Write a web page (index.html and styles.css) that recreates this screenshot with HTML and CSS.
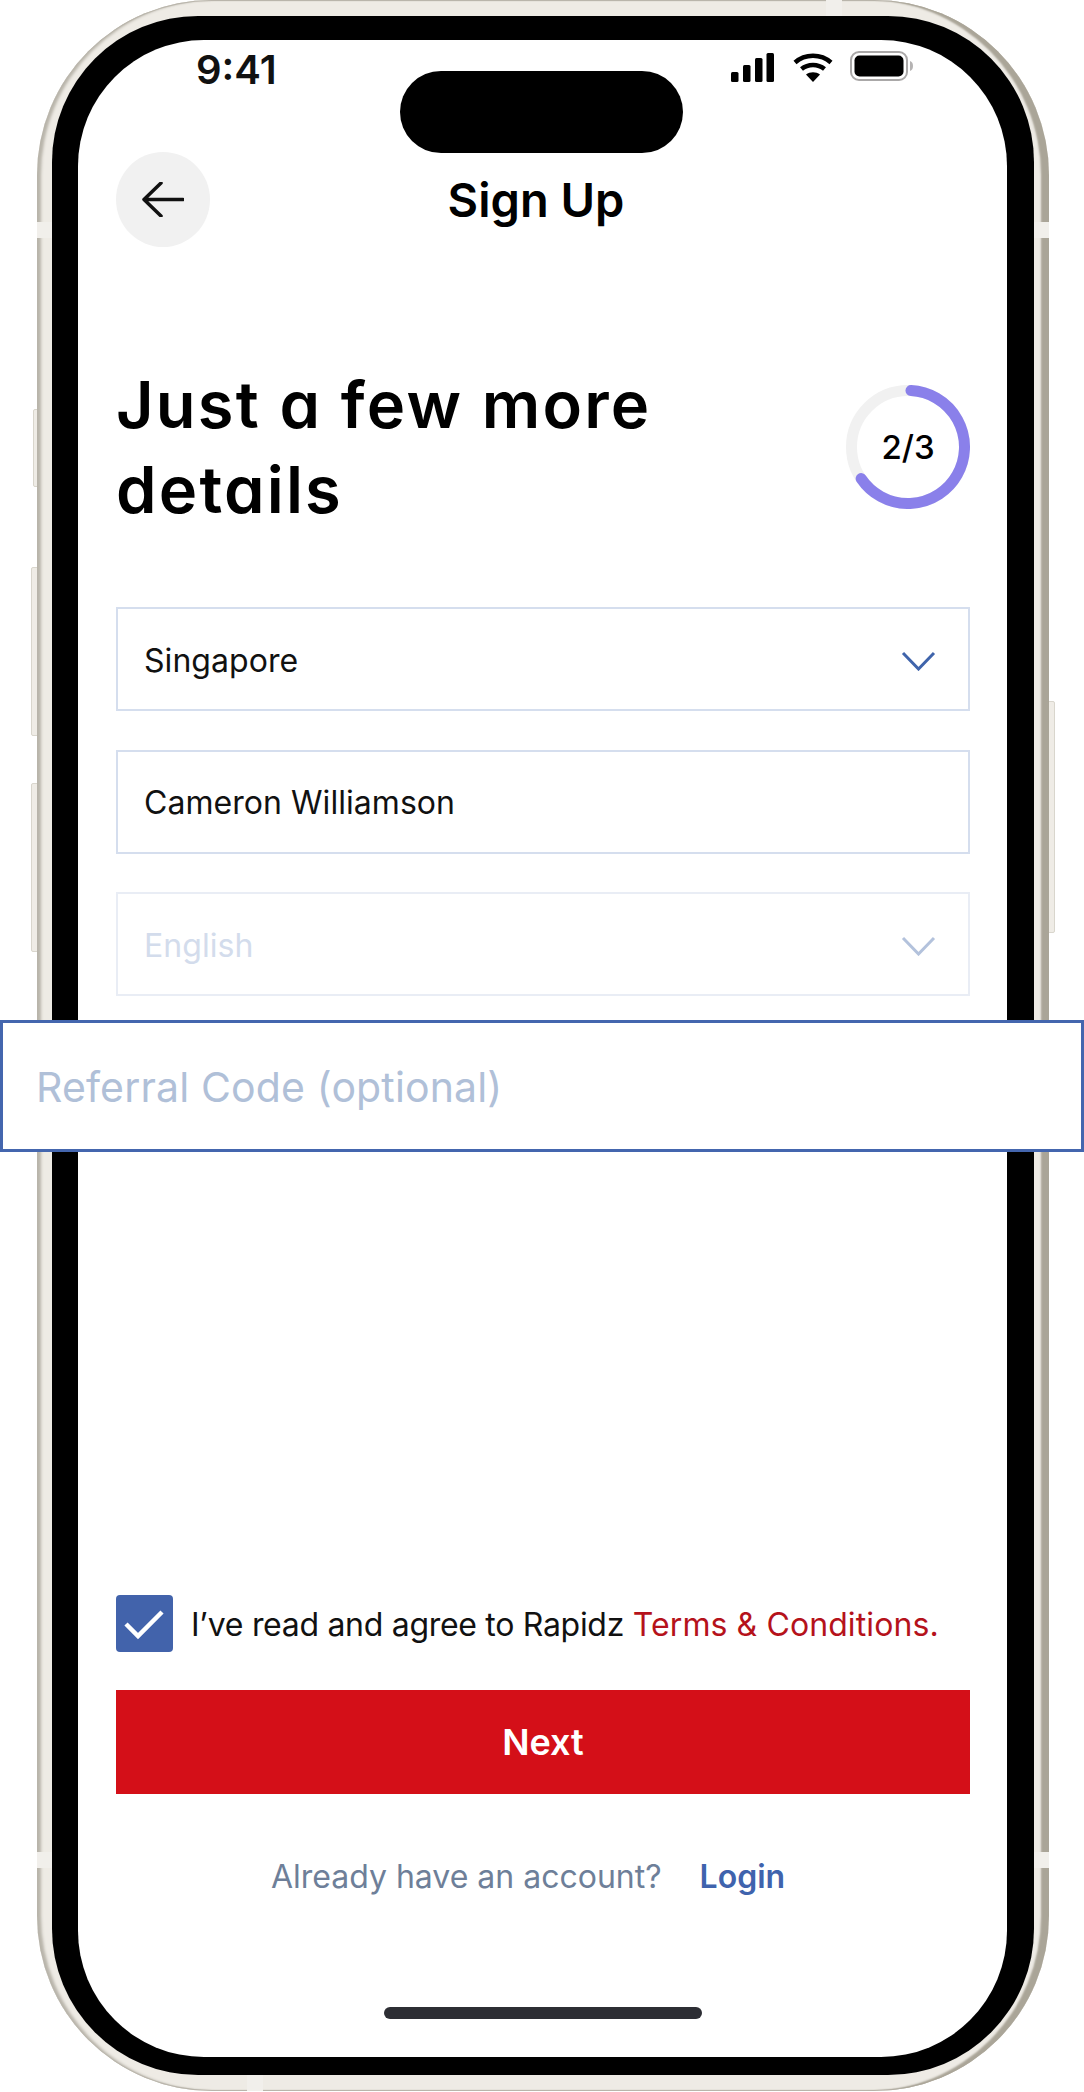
FILE: index.html
```html
<!DOCTYPE html>
<html lang="en">
<head>
    <meta charset="UTF-8">
    <meta name="viewport" content="width=device-width, initial-scale=1.0">
    <title>Sign Up</title>
    <link rel="stylesheet" href="styles.css">
</head>
<body>
    <div class="page">
        <!-- Side buttons and antenna bands of the phone -->
        <span class="side-btn btn-action"></span>
        <span class="side-btn btn-vol-up"></span>
        <span class="side-btn btn-vol-down"></span>
        <span class="side-btn btn-power"></span>

        <div class="phone">
            <span class="band band-top"></span>
            <span class="band band-left-top"></span>
            <span class="band band-right-top"></span>
            <span class="band band-left-bottom"></span>
            <span class="band band-right-bottom"></span>
            <span class="band band-bottom"></span>

            <div class="bezel">
                <div class="screen">
                    <div class="status-bar">
                        <div class="time">9:41</div>
                        <div class="island"></div>
                        <div class="status-icons">
                            <svg width="43" height="29" viewBox="0 0 43 29">
                                <rect x="0" y="19" width="7.5" height="10" rx="1.5"/>
                                <rect x="12" y="12" width="7.5" height="17" rx="1.5"/>
                                <rect x="24" y="5" width="7.5" height="24" rx="1.5"/>
                                <rect x="35.5" y="0" width="7.5" height="29" rx="1.5"/>
                            </svg>
                            <svg width="40" height="29" viewBox="0 0 40 29">
                                <path d="M2 9.5C12 .5 28 .5 38 9.5" fill="none" stroke="#000" stroke-width="4.5"/>
                                <path d="M8.5 16C15 10.5 25 10.5 31.5 16" fill="none" stroke="#000" stroke-width="4.5"/>
                                <path d="M20 29L13 21.5C17 18.5 23 18.5 27 21.5Z"/>
                            </svg>
                            <svg width="64" height="30" viewBox="0 0 64 30">
                                <rect x="1" y="1" width="56" height="28" rx="8" fill="none" stroke="#aaa8a8" stroke-width="2"/>
                                <rect x="4.5" y="4.5" width="49" height="21" rx="5"/>
                                <path d="M60 10c2 .5 3 2.500 3 5s-1 4.500-3 5Z" fill="#b5b3b3"/>
                            </svg>
                        </div>
                    </div>

                    <div class="content">
                        <div class="top-bar">
                            <button class="back-btn" type="button">
                                <svg width="42" height="35" viewBox="0 0 42 35">
                                    <path d="M41 17.500H2M19 1 2 17.500 19 34" fill="none" stroke="#111" stroke-width="3.500" stroke-linecap="round" stroke-linejoin="round"/>
                                </svg>
                            </button>
                            <h1 class="page-title">Sign Up</h1>
                        </div>

                        <div class="heading-row">
                            <h2 class="heading">Just a few more<br>details</h2>
                            <div class="ring">
                                <svg width="124" height="124" viewBox="0 0 124 124">
                                    <circle cx="62" cy="62" r="56.500" fill="none" stroke="#f1f1f1" stroke-width="11"/>
                                    <path d="M64.960 5.580A56.500 56.500 0 1 1 15.160 93.600" fill="none" stroke="#8a80ea" stroke-width="11" stroke-linecap="round"/>
                                </svg>
                                <span class="ring-label">2/3</span>
                            </div>
                        </div>

                        <div class="fields">
                            <div class="field">
                                <span class="field-text">Singapore</span>
                                <svg class="chevron" width="35" height="20" viewBox="0 0 35 20"><path d="M2 2 17.500 18 33 2" fill="none" stroke="#3f64ab" stroke-width="3"/></svg>
                            </div>
                            <div class="field">
                                <span class="field-text">Cameron Williamson</span>
                            </div>
                            <div class="field field-disabled">
                                <span class="field-text">English</span>
                                <svg class="chevron" width="35" height="20" viewBox="0 0 35 20"><path d="M2 2 17.500 18 33 2" fill="none" stroke="#b3c2dc" stroke-width="3"/></svg>
                            </div>
                        </div>

                        <div class="bottom">
                            <div class="agree">
                                <span class="checkbox">
                                    <svg width="57" height="57" viewBox="0 0 57 57"><path d="M10 29 22 41 46 17" fill="none" stroke="#fff" stroke-width="4.500"/></svg>
                                </span>
                                <span class="agree-text">I’ve read and agree to Rapidz <a class="terms" href="#">Terms &amp; Conditions.</a></span>
                            </div>
                            <button class="next-btn" type="button">Next</button>
                            <div class="login-row">
                                <span>Already have an account?</span>
                                <a class="login" href="#">Login</a>
                            </div>
                            <div class="home-bar"></div>
                        </div>
                    </div>
                </div>
            </div>
        </div>

        <!-- Focused input, blown up over the phone -->
        <div class="referral">Referral Code (optional)</div>
    </div>
</body>
</html>
```

FILE: styles.css
```css
body {
    margin: 0;
    background: #fff;
    font-family: Inter, "Liberation Sans", sans-serif;
    color: #111;
}
.page {
    position: relative;
    width: 1084px;
    height: 2092px;
    overflow: hidden;
}

/* Phone frame */
.phone {
    position: relative;
    box-sizing: border-box;
    width: 1012px;
    height: 2091px;
    margin-left: 37px;
    padding: 16px 15px 16px 15px;
    border-radius: 175px;
    background: #eeebe5;
    box-shadow: inset 5px 0 3px -1px #b8b4aa, inset -9px 0 2px -1px #aaa598, inset 0 2px 1px -1px #b5b1a7, inset 0 -2px 1px -1px #b5b1a7;
}
.bezel {
    box-sizing: border-box;
    height: 100%;
    padding: 24px 27px 18px 26px;
    border-radius: 146px;
    background: #000;
}
.screen {
    display: flex;
    flex-direction: column;
    height: 100%;
    border-radius: 126px;
    background: #fff;
}
.band {
    position: absolute;
    background: #f1efeb;
}
.band-top { left: 789px; top: 0; width: 16px; height: 16px; }
.band-left-top { left: 0; top: 222px; width: 15px; height: 16px; }
.band-right-top { right: 0; top: 222px; width: 15px; height: 16px; }
.band-left-bottom { left: 0; top: 1852px; width: 15px; height: 16px; }
.band-right-bottom { right: 0; top: 1852px; width: 15px; height: 16px; }
.band-bottom { left: 210px; bottom: 0; width: 16px; height: 16px; }

.side-btn {
    position: absolute;
    box-sizing: border-box;
    border: 1px solid #d9d6cd;
    background: #efece6;
}
.btn-action { left: 33px; top: 409px; width: 5px; height: 78px; border-radius: 2px 0 0 2px; }
.btn-vol-up { left: 31px; top: 567px; width: 7px; height: 169px; border-radius: 2px 0 0 2px; }
.btn-vol-down { left: 31px; top: 783px; width: 7px; height: 169px; border-radius: 2px 0 0 2px; }
.btn-power { left: 1048px; top: 701px; width: 7px; height: 232px; border-radius: 0 2px 2px 0; }

/* Status bar */
.status-bar {
    display: grid;
    grid-template-columns: 322px 283px 1fr;
    height: 113px;
}
.time {
    padding: 8px 0 0 118px;
    font-size: 40px;
    font-weight: 600;
    line-height: 44px;
}
.island {
    height: 82px;
    margin-top: 31px;
    border-radius: 41px;
    background: #000;
}
.status-icons {
    display: flex;
    align-items: flex-start;
    gap: 19px;
    padding: 13px 0 0 48px;
}
.status-icons svg:last-child {
    margin: -2px 0 0 -2px;
}

.content {
    display: flex;
    flex-direction: column;
    flex: 1;
    padding: 0 37px 38px 38px;
}

/* Title bar */
.top-bar {
    display: grid;
    grid-template-columns: 94px 1fr 94px;
    align-items: center;
    margin-top: -1px;
}
.back-btn {
    display: flex;
    align-items: center;
    justify-content: center;
    width: 94px;
    height: 95px;
    padding: 0;
    border: none;
    border-radius: 50%;
    background: #f1f1f1;
}
.page-title {
    margin: 0;
    padding-right: 14px;
    text-align: center;
    font-size: 47px;
    font-weight: 600;
    color: #000;
}

/* Heading and progress */
.heading-row {
    display: flex;
    justify-content: space-between;
    align-items: center;
    margin-top: 115px;
}
.heading {
    margin: 0;
    font-size: 65px;
    font-weight: 570;
    line-height: 85px;
    letter-spacing: 2.2px;
    color: #000;
    font-feature-settings: "cv11";
}
.ring {
    display: grid;
    place-items: center;
}
.ring svg, .ring-label {
    grid-area: 1 / 1;
}
.ring-label {
    font-size: 33px;
    font-weight: 500;
    color: #000;
}

/* Inputs */
.fields {
    display: flex;
    flex-direction: column;
    gap: 38.5px;
    margin-top: 75px;
}
.field {
    display: flex;
    justify-content: space-between;
    align-items: center;
    box-sizing: border-box;
    height: 104px;
    padding: 0 32px 0 26px;
    border: 2px solid #d5deee;
    font-size: 32px;
}
.field-text {
    padding-top: 2px;
    letter-spacing: 0.05px;
}
.chevron {
    margin-top: 3px;
}
.field-disabled {
    border-color: #e9edf5;
    color: #d3dcec;
}
.referral {
    position: absolute;
    left: 0;
    right: 0;
    top: 1020px;
    box-sizing: border-box;
    height: 132px;
    padding-left: 33px;
    border: 3px solid #4466ae;
    background: #fff;
    font-size: 41px;
    line-height: 129px;
    letter-spacing: 0.15px;
    color: #b0c0d8;
}

/* Bottom actions */
.bottom {
    display: flex;
    flex-direction: column;
    margin-top: auto;
}
.agree {
    display: flex;
    align-items: center;
    gap: 18px;
    font-size: 32px;
}
.agree-text {
    padding-top: 2px;
    letter-spacing: -0.3px;
}
.checkbox {
    width: 57px;
    height: 57px;
    border-radius: 4px;
    background: #4263ab;
}
.checkbox svg {
    display: block;
}
.terms {
    color: #b5121b;
    letter-spacing: 0.1px;
    text-decoration: none;
}
.next-btn {
    height: 104px;
    margin-top: 38px;
    border: none;
    background: #d40f18;
    color: #fff;
    font-family: inherit;
    font-size: 36px;
    font-weight: 600;
}
.login-row {
    display: flex;
    justify-content: center;
    gap: 38px;
    margin-top: 61px;
    padding-right: 30px;
    font-size: 32px;
    line-height: 44px;
    color: #6e7f99;
}
.login {
    color: #3f63ad;
    font-weight: 600;
    text-decoration: none;
}
.home-bar {
    align-self: center;
    width: 318px;
    height: 12px;
    margin-top: 108px;
    border-radius: 6px;
    background: #2d2e34;
}
```
